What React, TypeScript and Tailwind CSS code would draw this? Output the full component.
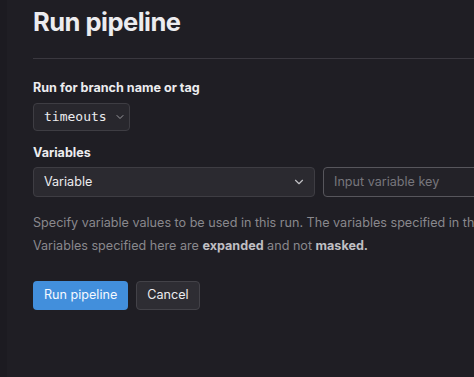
import { ChevronDown } from "lucide-react";

const sans = { fontFamily: "Inter, 'Noto Sans', sans-serif" };

function FieldLabel({ children }: { children: string }) {
  return <div className="text-[12.6px] font-bold leading-5 text-[#ececef]">{children}</div>;
}

export default function App() {
  return (
    <div className="flex min-h-screen overflow-hidden bg-[#1f1e24]" style={sans}>
      <div className="w-[7px] shrink-0 bg-[#1c1b21]" />
      <main className="flex-1 pl-[26px] pt-[3px]">
        <h1 className="text-[25.5px] font-bold leading-[38px] tracking-[-0.02em] text-[#ececef]">
          Run pipeline
        </h1>
        <div className="mt-[17px] border-t border-[#3a383f]" />

        <div className="mt-[19px]">
          <FieldLabel>Run for branch name or tag</FieldLabel>
          <button className="mt-[5px] flex h-[28px] w-[97px] items-center gap-[7px] rounded-[4px] border border-[#3e3d43] bg-[#28272d] pl-[10px] text-[#ececef]">
            <span className="text-[13px]" style={{ fontFamily: "'DejaVu Sans Mono', monospace" }}>
              timeouts
            </span>
            <ChevronDown className="h-[12px] w-[12px] text-[#9a999e]" strokeWidth={2} />
          </button>
        </div>

        <div className="mt-[12px]">
          <FieldLabel>Variables</FieldLabel>
          <div className="mt-[4px] flex gap-[8px]">
            <div className="flex h-[30px] w-[282px] shrink-0 items-center justify-between rounded-[4px] border border-[#3e3d43] bg-[#2b2a30] pl-[10px] pr-[8px] text-[12.6px] text-[#ececef]">
              <span>Variable</span>
              <ChevronDown className="h-[14px] w-[14px] text-[#bfbfc3]" strokeWidth={2} />
            </div>
            <div className="flex h-[30px] w-[282px] shrink-0 items-center rounded-[4px] border border-[#57565c] bg-[#232228] pl-[10px] text-[12.6px] text-[#77767c]">
              Input variable key
            </div>
          </div>
        </div>

        <div className="mt-[14px] whitespace-nowrap text-[12.6px] leading-[23px] text-[#89888d]">
          <p>
            Specify variable values to be used in this run. The variables specified in the configuration file as well as CI/CD settings are used by default.
          </p>
          <p>
            Variables specified here are <b className="text-[#bfbfc3]">expanded</b> and not{" "}
            <b className="text-[#bfbfc3]">masked.</b>
          </p>
        </div>

        <div className="mt-[24px] flex gap-[8px]">
          <button className="h-[29px] rounded-[4px] bg-[#428fdc] px-[11px] text-[12.6px] text-[#f5f9ff]">
            Run pipeline
          </button>
          <button className="h-[29px] rounded-[4px] border border-[#434248] bg-[#2e2d33] px-[10px] text-[12.6px] text-[#ececef]">
            Cancel
          </button>
        </div>
      </main>
    </div>
  );
}
